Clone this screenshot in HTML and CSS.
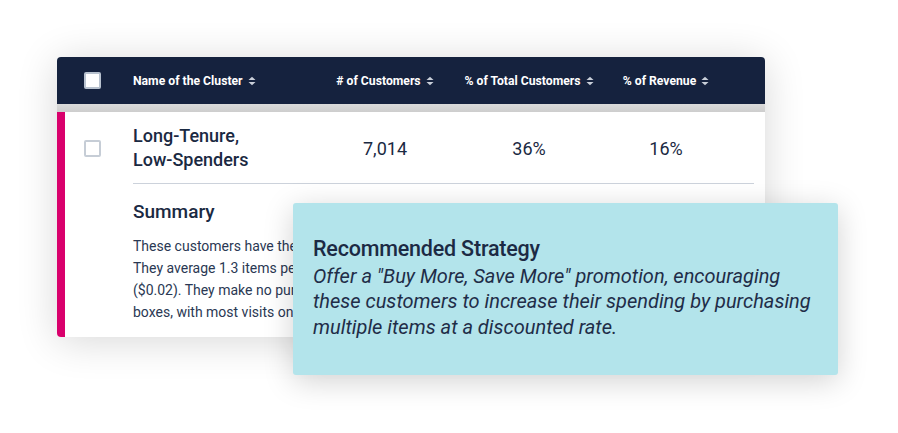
FILE: index.html
```html
<!DOCTYPE html>
<html lang="en">
<head>
<meta charset="utf-8">
<title>Cluster table</title>
<link rel="stylesheet" href="styles.css">
</head>
<body>
<div class="stage">
  <div class="table">
    <div class="thead">
      <div class="cell-check"><span class="box box-head"></span></div>
      <div class="th th-left">Name of the Cluster <svg class="sort" viewBox="0 0 8 10" width="8" height="10"><polygon points="0.5,4 4,0.8 7.5,4"/><polygon points="0.5,6 4,9.2 7.5,6"/></svg></div>
      <div class="th">&#35; of Customers <svg class="sort" viewBox="0 0 8 10" width="8" height="10"><polygon points="0.5,4 4,0.8 7.5,4"/><polygon points="0.5,6 4,9.2 7.5,6"/></svg></div>
      <div class="th">% of Total Customers <svg class="sort" viewBox="0 0 8 10" width="8" height="10"><polygon points="0.5,4 4,0.8 7.5,4"/><polygon points="0.5,6 4,9.2 7.5,6"/></svg></div>
      <div class="th">% of Revenue <svg class="sort" viewBox="0 0 8 10" width="8" height="10"><polygon points="0.5,4 4,0.8 7.5,4"/><polygon points="0.5,6 4,9.2 7.5,6"/></svg></div>
    </div>
    <div class="gap"></div>
    <div class="card">
      <div class="row">
        <div class="cell-check"><span class="box"></span></div>
        <div class="name">Long-Tenure,<br>Low-Spenders</div>
        <div class="num">7,014</div>
        <div class="num">36%</div>
        <div class="num">16%</div>
      </div>
      <div class="divider"></div>
      <div class="summary">
        <h3 class="summary-title">Summary</h3>
        <p class="summary-text">These customers have the longest tenure with the brand but the lowest average spend per visit.<br>They average 1.3 items per transaction and redeem almost no discounts per order<br>($0.02). They make no purchases in premium categories or subscription<br>boxes, with most visits on weekday mornings.</p>
      </div>
    </div>
  </div>
  <div class="callout">
    <h3 class="callout-title">Recommended Strategy</h3>
    <p class="callout-text">Offer a "Buy More, Save More" promotion, encouraging<br>these customers to increase their spending by purchasing<br>multiple items at a discounted rate.</p>
  </div>
</div>
</body>
</html>
```

FILE: styles.css
```css
* { box-sizing: border-box; }
html, body { margin: 0; padding: 0; background: #ffffff; }
body {
  font-family: Roboto, "Liberation Sans", sans-serif;
  width: 898px;
  height: 433px;
  overflow: hidden;
}
.stage {
  position: relative;
  padding: 57px 0 0 57px;
  height: 433px;
}
.table {
  width: 708px;
  border-radius: 4px;
  box-shadow: 0 4px 40px rgba(0, 0, 0, 0.16);
}
.thead {
  height: 47px;
  background: #15223e;
  border-radius: 4px 4px 0 0;
  display: grid;
  grid-template-columns: 76px 177px 150px 138px 136px;
  align-items: center;
  color: #ffffff;
}
.cell-check { display: flex; align-items: center; }
.thead .cell-check { padding-left: 27px; }
.box {
  display: block;
  width: 17px;
  height: 17px;
  border: 2px solid #c6cdd6;
  border-radius: 2px;
  background: #ffffff;
}
.box-head { border-color: #b8c2cf; }
.th {
  font-size: 12.2px;
  font-weight: 700;
  text-align: center;
  white-space: nowrap;
  display: flex;
  align-items: center;
  justify-content: center;
  gap: 5px;
}
.th-left { justify-content: flex-start; }
.sort { fill: #c9cfd9; display: block; flex-shrink: 0; }
.gap {
  height: 8px;
  background: linear-gradient(#dadada, #cdcdcd);
}
.card {
  background: #ffffff;
  border-left: 8px solid #d9006c;
  border-radius: 0 0 4px 4px;
  height: 225px;
  overflow: hidden;
}
.row {
  display: grid;
  grid-template-columns: 68px 177px 150px 138px 136px;
  align-items: center;
  padding: 12px 0 11px;
  color: #1a2942;
}
.row .cell-check { padding-left: 19px; }
.name {
  font-size: 18px;
  font-weight: 500;
  line-height: 24px;
}
.num {
  font-size: 18px;
  font-weight: 400;
  text-align: center;
}
.divider {
  margin: 0 11px 0 68px;
  border-top: 1px solid #ccd2db;
}
.summary {
  padding: 16px 0 0 68px;
  color: #1f2e48;
}
.summary-title {
  margin: 0;
  font-size: 19px;
  font-weight: 500;
  line-height: 24px;
  color: #1a2942;
}
.summary-text {
  margin: 11px 0 0;
  font-size: 14px;
  line-height: 22px;
  white-space: nowrap;
  color: #2a3853;
}
.callout {
  position: absolute;
  left: 293px;
  top: 203px;
  width: 545px;
  height: 172px;
  background: #b3e4eb;
  border-radius: 3px;
  box-shadow: 0 6px 30px rgba(0, 0, 0, 0.18);
  padding: 0 20px 3px;
  display: flex;
  flex-direction: column;
  justify-content: center;
  color: #1c2a44;
}
.callout-title {
  margin: 0 0 1px;
  font-size: 21.5px;
  font-weight: 500;
  line-height: 28px;
  letter-spacing: -0.2px;
}
.callout-text {
  margin: 0;
  font-size: 20px;
  font-style: italic;
  line-height: 25.5px;
  white-space: nowrap;
  color: #1f2d48;
}
```
